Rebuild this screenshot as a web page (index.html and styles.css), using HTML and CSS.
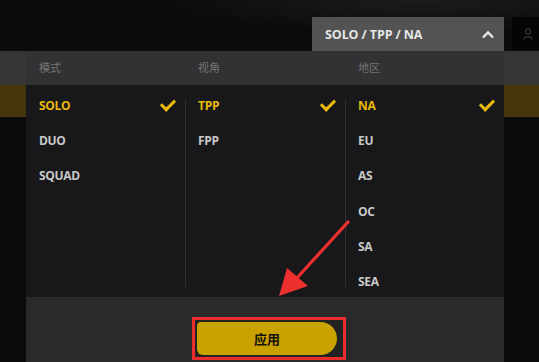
FILE: index.html
```html
<!DOCTYPE html>
<html lang="zh-CN">
<head>
    <meta charset="UTF-8">
    <meta name="viewport" content="width=device-width, initial-scale=1.0">
    <title>匹配设置</title>
    <link rel="stylesheet" href="styles.css">
</head>
<body>
    <div class="topbar">
        <div class="select-toggle">
            <span>SOLO / TPP / NA</span>
            <svg class="chevron" width="14" height="9" viewBox="0 0 14 9"><path d="M2 7.5 L7 2.5 L12 7.5" fill="none" stroke="#e8e8e8" stroke-width="2.4"/></svg>
        </div>
        <div class="side-btn">
            <svg width="10" height="12" viewBox="0 0 10 12"><circle cx="5" cy="3.5" r="2.6" fill="none" stroke="#333" stroke-width="1.2"/><path d="M1 11.5 C1 8 9 8 9 11.5" fill="none" stroke="#333" stroke-width="1.2"/></svg>
        </div>
    </div>

    <div class="stage">
        <div class="panel">
            <div class="panel-head">
                <div class="head-cell">模式</div>
                <div class="head-cell">视角</div>
                <div class="head-cell">地区</div>
            </div>

            <div class="panel-body">
                <div class="column">
                    <div class="option selected">SOLO <span class="check"></span></div>
                    <div class="option">DUO</div>
                    <div class="option">SQUAD</div>
                </div>
                <div class="column">
                    <div class="option selected">TPP <span class="check"></span></div>
                    <div class="option">FPP</div>
                </div>
                <div class="column">
                    <div class="option selected">NA <span class="check"></span></div>
                    <div class="option">EU</div>
                    <div class="option">AS</div>
                    <div class="option">OC</div>
                    <div class="option">SA</div>
                    <div class="option">SEA</div>
                </div>
            </div>

            <div class="panel-foot">
                <div class="highlight">
                    <button class="apply-btn">应用</button>
                </div>
            </div>

            <!-- annotation arrow pointing at the apply button -->
            <svg class="arrow" width="90" height="90" viewBox="0 0 90 90">
                <path d="M73 3 L21 60" stroke="#ec2f2f" stroke-width="3.2" stroke-linecap="round"/>
                <path d="M4 77 L12 49 L33 67 Z" fill="#ec2f2f"/>
            </svg>
        </div>
    </div>
</body>
</html>
```

FILE: styles.css
```css
body {
    margin: 0;
    width: 539px;
    height: 362px;
    overflow: hidden;
    background: #0b0b0b;
    font-family: "Open Sans", "Noto Sans CJK SC", sans-serif;
}
.topbar {
    height: 51px;
    display: flex;
    justify-content: flex-end;
    align-items: flex-end;
    background: radial-gradient(ellipse at 78% 0%, #1c1c1c 0%, #0b0b0b 45%);
}
.select-toggle {
    width: 192px;
    height: 34px;
    box-sizing: border-box;
    padding: 0 9px 0 13px;
    display: flex;
    align-items: center;
    justify-content: space-between;
    background: #535353;
    color: #e6e6e6;
    font-size: 12.5px;
    font-weight: 700;
    letter-spacing: -0.1px;
}
.side-btn {
    width: 27px;
    height: 34px;
    margin-left: 8px;
    display: flex;
    align-items: center;
    justify-content: flex-end;
    padding-right: 6px;
    box-sizing: border-box;
    background: #050505;
}
.stage {
    height: 311px;
    background: linear-gradient(#353535 0, #353535 34px, #45360b 34px, #45360b 66px, #0b0b0b 66px);
}
.panel {
    position: relative;
    width: 478px;
    margin-left: 26px;
    height: 311px;
}
.panel-head {
    display: grid;
    grid-template-columns: 159px 160px 159px;
    height: 34px;
    background: #323234;
}
.head-cell {
    padding-left: 13px;
    line-height: 34px;
    font-size: 11px;
    color: #747474;
}
.panel-body {
    display: grid;
    grid-template-columns: 159px 160px 159px;
    height: 212px;
    box-sizing: border-box;
    padding-top: 3px;
    background: #18181b;
}
.column {
    position: relative;
}
.column + .column::before {
    content: "";
    position: absolute;
    left: 0;
    top: 11px;
    bottom: 12px;
    width: 1px;
    background: #303033;
}
.option {
    height: 35.2px;
    display: flex;
    align-items: center;
    justify-content: space-between;
    padding: 0 10px 0 13px;
    font-size: 12px;
    font-weight: 700;
    color: #c8c8c8;
    letter-spacing: -0.3px;
}
.option.selected {
    color: #e8b90c;
}
.check {
    width: 11px;
    height: 6px;
    margin-top: -5px;
    border-left: 3px solid #e8b90c;
    border-bottom: 3px solid #e8b90c;
    transform: rotate(-45deg);
}
.panel-foot {
    height: 65px;
    background: #2a2a2a;
    display: flex;
    justify-content: center;
    padding-top: 20px;
    padding-left: 8px;
    box-sizing: border-box;
}
.highlight {
    width: 154px;
    height: 43px;
    box-sizing: border-box;
    border: 3px solid #ea2c2c;
    padding: 2px 6px 2px 2px;
    background: #222;
}
.apply-btn {
    width: 100%;
    height: 100%;
    border: none;
    border-radius: 4px 17px 17px 6px;
    background: #c9a200;
    color: #15120a;
    font-family: "Noto Sans CJK SC", sans-serif;
    font-size: 13px;
    font-weight: 700;
    padding: 0;
}
.arrow {
    position: absolute;
    left: 249px;
    top: 168px;
}
```
